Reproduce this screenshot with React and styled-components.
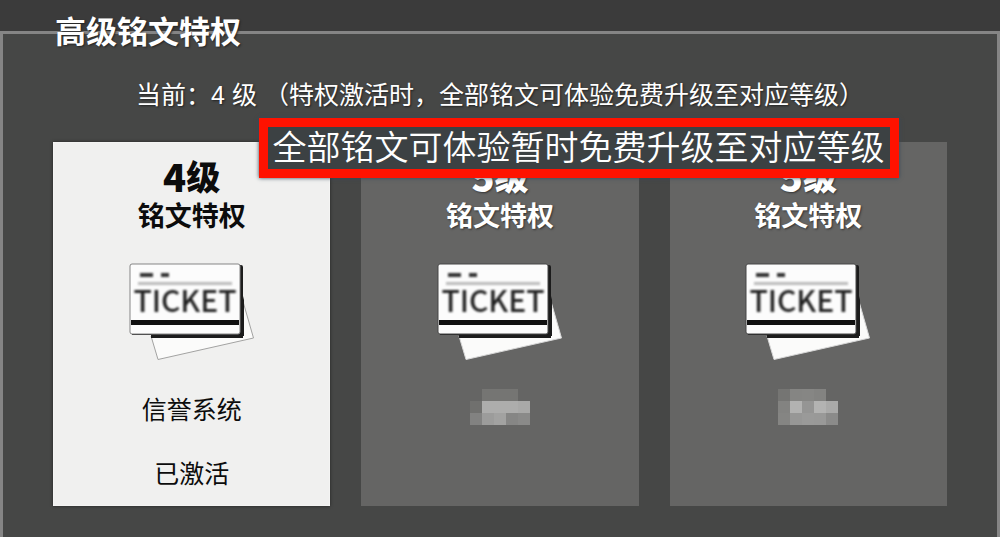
import styled, { createGlobalStyle } from "styled-components";

const mosaicA = [
  "transparent", "#757573", "#757573", "#757573", "transparent",
  "#70706e", "#adadac", "#adadac", "#adadac", "#a9a9a8",
  "#828281", "#9c9c9b", "#a2a2a1", "#868685", "#8a8a89",
];

const mosaicB = [
  "#757573", "#858583", "#868684", "#838381", "transparent",
  "#838381", "#b2b2b1", "#959594", "#b3b3b2", "#aaaaa9",
  "#858583", "#979796", "#9a9a99", "#999998", "#8b8b8a",
];

const privileges = [
  { id: 1, level: 4, name: "铭文特权", reward: "信誉系统", status: "已激活", active: true },
  { id: 2, level: 5, name: "铭文特权", mosaic: mosaicA },
  { id: 3, level: 5, name: "铭文特权", mosaic: mosaicB },
];

function TicketIcon({ active }) {
  return (
    <Ticket viewBox="0 0 128 100" aria-hidden="true">
      <path
        d="M23 74 L30 97.500 L125.500 76 L114 36 Z"
        fill="#fbfbfa"
        stroke={active ? "#a3a3a2" : "#d8d8d8"}
        strokeWidth="1"
      />
      <path d="M4 3 H113 Q115 3 115 5 V34 L116 38 V74 H24 V76 H23 V73 H4 Z" fill="#1c1c1c" />
      <path d="M24 74.500 H115" stroke="#1c1c1c" strokeWidth="3" />
      <rect
        x="2"
        y="2"
        width="110"
        height="70"
        rx="2"
        fill="#fcfcfc"
        stroke={active ? "#858585" : "#474747"}
        strokeWidth="1"
      />
      <rect x="3" y="58" width="108" height="5" fill="#101010" />
      <TicketInk>
        <rect x="12" y="11" width="13" height="4" fill="#333" />
        <rect x="33" y="11" width="8" height="4" fill="#333" />
        <rect x="10" y="20" width="94" height="3" fill="#bbb" />
        <TicketText x="57" y="50" textAnchor="middle">TICKET</TicketText>
      </TicketInk>
    </Ticket>
  );
}

function PrivilegeCard({ item }) {
  return (
    <Card $active={item.active}>
      <Level>
        <Digit>{item.level}</Digit>级
      </Level>
      <Name>{item.name}</Name>
      <TicketIcon active={item.active} />
      {item.reward && <Reward>{item.reward}</Reward>}
      {item.mosaic && (
        <Mosaic>
          {item.mosaic.map((color, i) => (
            <Cell key={i} $color={color} />
          ))}
        </Mosaic>
      )}
      {item.status && <Status>{item.status}</Status>}
    </Card>
  );
}

function App() {
  return (
    <Page>
      <GlobalStyle />
      <Panel>
        <Title>高级铭文特权</Title>
        <Current>当前：4 级 （特权激活时，全部铭文可体验免费升级至对应等级）</Current>
        <Cards>
          {privileges.map((item) => (
            <PrivilegeCard key={item.id} item={item} />
          ))}
          <Callout>全部铭文可体验暂时免费升级至对应等级</Callout>
        </Cards>
      </Panel>
    </Page>
  );
}

const GlobalStyle = createGlobalStyle`
  * {
    box-sizing: border-box;
  }

  body {
    margin: 0;
    background: #3b3b3b;
    font-family: "Liberation Sans", "Noto Sans CJK SC", sans-serif;
  }
`;

const Page = styled.main`
  display: flex;
  flex-direction: column;
  min-height: 100vh;
  padding-top: 31px;
  background: #3b3b3b;
`;

const Panel = styled.section`
  flex: 1;
  padding: 0 50px 28px;
  border: 3px solid #858585;
  border-bottom: none;
  background: #464746;
`;

const Title = styled.h1`
  margin: -21px 0 0;
  padding-left: 2px;
  font-size: 31px;
  line-height: 40px;
  font-weight: 700;
  color: #fff;
  text-shadow: 1px 1px 2px #222;
`;

const Current = styled.p`
  margin: 24px 0 29px;
  font-size: 25px;
  line-height: 36px;
  text-align: center;
  white-space: nowrap;
  color: #fff;
  text-shadow: 1px 1px 2px #222;
`;

const Cards = styled.div`
  position: relative;
  display: grid;
  grid-template-columns: repeat(3, 1fr);
  gap: 31px;
`;

const Card = styled.article`
  display: flex;
  flex-direction: column;
  align-items: center;
  min-height: 364px;
  padding: 15px 0 14px;
  background: ${(props) => (props.$active ? "#f0f0ef" : "#656564")};
  color: ${(props) => (props.$active ? "#0c0c0c" : "#fff")};
  box-shadow: ${(props) => (props.$active ? "0 0 3px #222, inset 0 0 2px #fff" : "none")};
  text-shadow: ${(props) => (props.$active ? "none" : "1px 1px 2px #333")};
`;

const Level = styled.h2`
  display: flex;
  align-items: center;
  margin: 0;
  font-size: 34px;
  line-height: 38px;
  font-weight: 900;
  font-family: "Noto Sans CJK SC", sans-serif;
`;

const Digit = styled.span`
  font-size: 38px;
`;

const Name = styled.h3`
  margin: 4px 0 0;
  font-size: 27px;
  line-height: 36px;
  font-weight: 700;
`;

const Ticket = styled.svg`
  width: 128px;
  height: 100px;
  margin-top: 27px;
  overflow: visible;
`;

const TicketInk = styled.g`
  filter: blur(1px);
`;

const TicketText = styled.text`
  font-family: "Noto Sans CJK SC", sans-serif;
  font-size: 30px;
  font-weight: 500;
  fill: #222;
  text-shadow: none;
`;

const Reward = styled.p`
  margin: 30px 0 0;
  font-size: 25px;
  line-height: 36px;
`;

const Status = styled.p`
  margin: 28px 0 0;
  font-size: 25px;
  line-height: 36px;
`;

const Mosaic = styled.div`
  display: grid;
  grid-template-columns: repeat(5, 12px);
  grid-auto-rows: 12px;
  margin-top: 27px;
`;

const Cell = styled.span`
  background: ${(props) => props.$color};
`;

const Callout = styled.strong`
  position: absolute;
  top: -24px;
  left: 23%;
  padding: 0 5px;
  border: 9px solid #ff1200;
  background: #3c4143;
  font-size: 34px;
  line-height: 42px;
  font-weight: 350;
  white-space: nowrap;
  color: #fff;
  box-shadow: 0 0 4px #34495a;
`;

export default App;
